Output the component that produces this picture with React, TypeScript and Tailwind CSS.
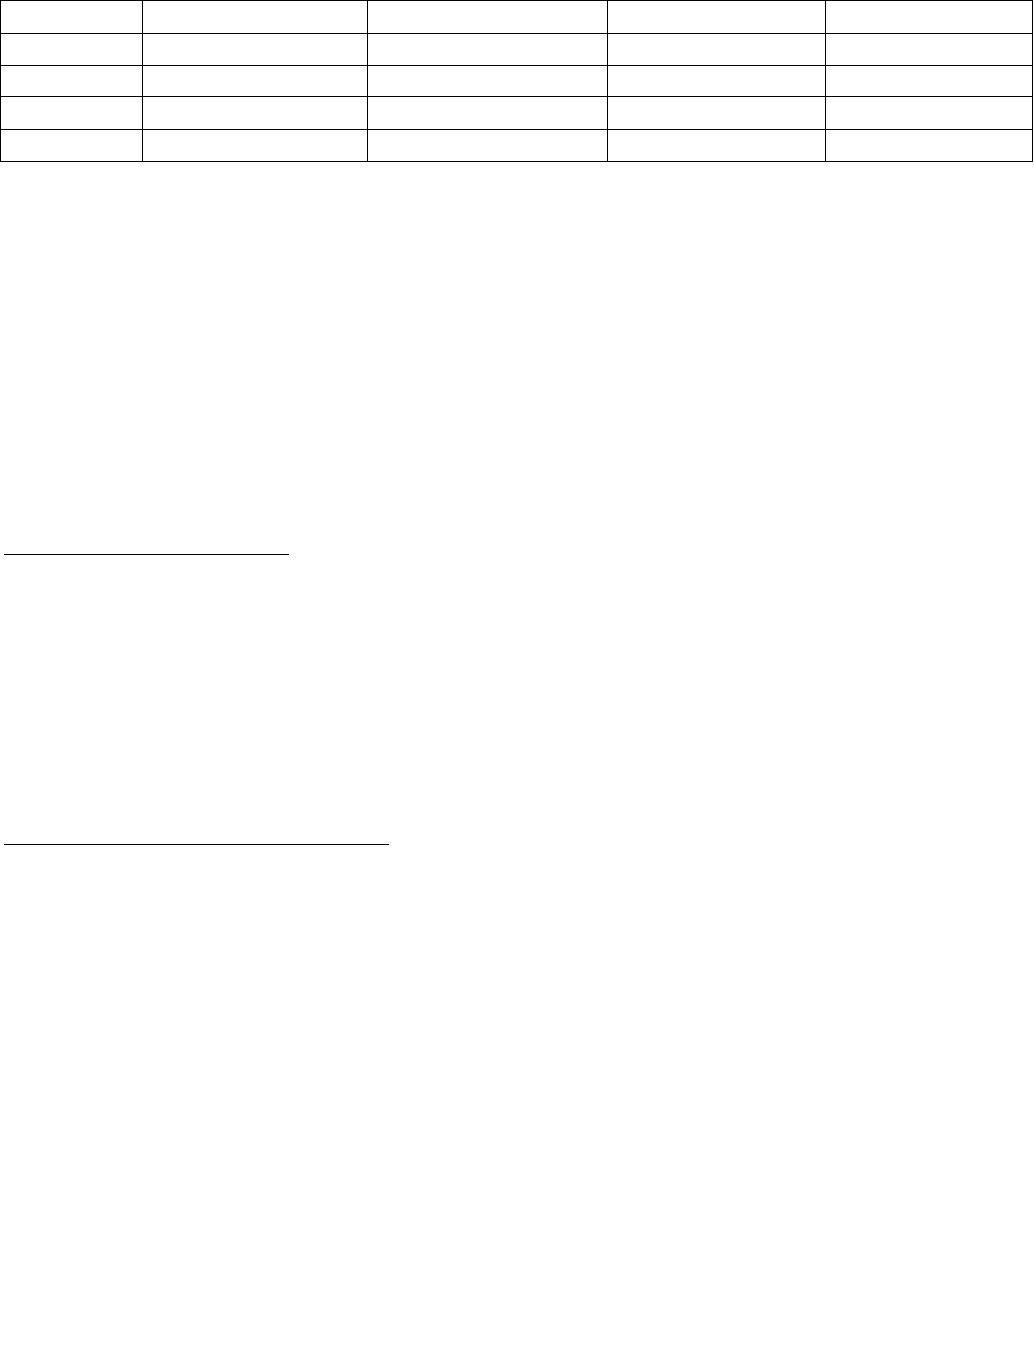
import React from 'react';

const widths = ['w-[142px]', 'w-[225px]', 'w-[240px]', 'w-[218px]', 'w-[207px]'];
const heights = ['h-[33px]', 'h-[32px]', 'h-[31px]', 'h-[33px]', 'h-[32px]'];

const App: React.FC = () => {
  return (
    <div className="min-h-[1346px] w-[1034px] bg-white font-['Liberation_Sans',sans-serif]">
      <div className="w-[1033px] border-l border-t border-black">
        {heights.map((h, r) => (
          <div key={r} className={`flex ${h}`}>
            {widths.map((w, c) => (
              <div key={c} className={`${w} h-full border-b border-r border-black`} />
            ))}
          </div>
        ))}
      </div>

      <div className="ml-[4px] mt-[392px] h-px w-[285px] bg-black" />
      <div className="ml-[4px] mt-[289px] h-px w-[385px] bg-black" />
    </div>
  );
};

export default App;
